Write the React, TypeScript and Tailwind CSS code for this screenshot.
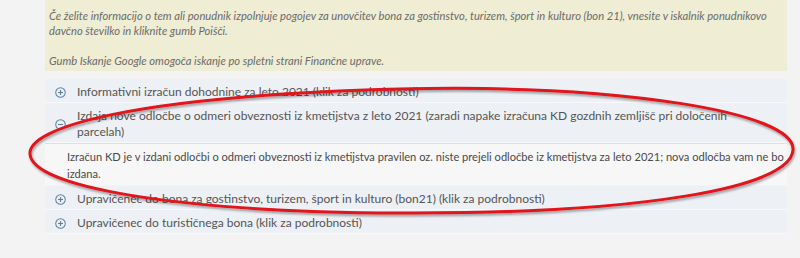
import React from 'react'

const PlusIcon = ({ minus = false }: { minus?: boolean }) => (
  <svg width="11" height="11" viewBox="0 0 12 12" className="shrink-0">
    <circle cx="6" cy="6" r="5.2" fill="none" stroke="#5f7f9c" strokeWidth="1.1" />
    <line x1="3.3" y1="6" x2="8.7" y2="6" stroke="#5f7f9c" strokeWidth="1.2" />
    {!minus && <line x1="6" y1="3.3" x2="6" y2="8.7" stroke="#5f7f9c" strokeWidth="1.2" />}
  </svg>
)

const Row = ({ children, minus = false }: { children: React.ReactNode; minus?: boolean }) => (
  <div className="flex items-center gap-[11px] pl-[10px] pr-4 pt-[5px] pb-[2px] bg-[#edf0f4] border-b border-[#f8f9fb] text-[12px] leading-[16px] text-[#555]">
    <PlusIcon minus={minus} />
    <span>{children}</span>
  </div>
)

export default function App() {
  return (
    <div className="relative w-[800px] h-[258px] bg-[#f3f3f3] overflow-hidden" style={{ fontFamily: 'Lato, "Open Sans", sans-serif' }}>
      <div className="ml-[45px] w-[742px]">
        {/* Obvestilo */}
        <div className="bg-[#efedd4] pl-1 pr-1 pt-[8px] pb-[3px] text-[11.2px] leading-[15px] italic text-[#6b6b6b]">
          Če želite informacijo o tem ali ponudnik izpolnjuje pogojev za unovčitev bona za gostinstvo, turizem, šport in kulturo (bon 21), vnesite v iskalnik ponudnikovo davčno številko in kliknite gumb Poišči.
          <br />
          <br />
          Gumb Iskanje Google omogoča iskanje po spletni strani Finančne uprave.
        </div>

        {/* Seznam */}
        <div className="mt-[8px]">
          <Row>Informativni izračun dohodnine za leto 2021 (klik za podrobnosti)</Row>
          <Row minus>
            Izdaja nove odločbe o odmeri obveznosti iz kmetijstva z leto 2021 (zaradi napake izračuna KD gozdnih zemljišč pri določenih parcelah)
          </Row>
          <div className="bg-[#f7f7f7] border-t border-[#dcdfe3] pl-[22px] pt-[4px] pb-[3px] mb-[1px] text-[11.1px] leading-[17px] text-[#4a4a4a]">
            Izračun KD je v izdani odločbi o odmeri obveznosti iz kmetijstva pravilen oz. niste prejeli odločbe iz kmetijstva za leto 2021; nova odločba vam ne bo izdana.
          </div>
          <Row>Upravičenec do bona za gostinstvo, turizem, šport in kulturo (bon21) (klik za podrobnosti)</Row>
          <Row>Upravičenec do turističnega bona (klik za podrobnosti)</Row>
        </div>
      </div>

      {/* Rdeča oznaka */}
      <svg className="absolute inset-0 pointer-events-none" width="800" height="258" viewBox="0 0 800 258">
        <defs>
          <filter id="sh" x="-5%" y="-5%" width="110%" height="120%">
            <feDropShadow dx="1" dy="2" stdDeviation="1.2" floodColor="#000" floodOpacity="0.35" />
          </filter>
        </defs>
        <path
          d="M 30 154 C 28 128, 130 96, 400 89 C 620 84, 796 112, 793 150 C 790 188, 640 214, 400 213 C 170 212, 32 186, 30 154 Z"
          fill="none"
          stroke="#e0141c"
          strokeWidth="3"
          filter="url(#sh)"
        />
      </svg>
    </div>
  )
}
